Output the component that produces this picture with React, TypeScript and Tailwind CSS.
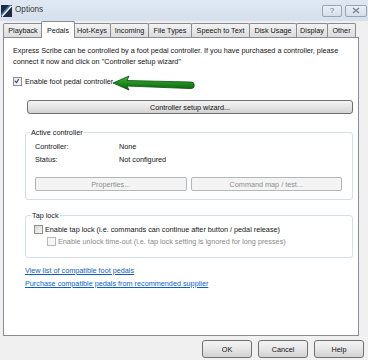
import React from 'react';

function Check({ checked, disabled }: { checked?: boolean; disabled?: boolean }) {
  return (
    <span
      className={`relative inline-flex shrink-0 w-[9px] h-[9px] border ${
        disabled
          ? 'border-[#b9b9b9] bg-[#f7f7f7]'
          : checked
          ? 'border-[#8e8f8f] bg-gradient-to-br from-[#e4e8ef] to-[#fcfcfd]'
          : 'border-[#8e8f8f] bg-gradient-to-br from-[#d6d6d6] to-[#f8f8f8]'
      }`}
    >
      {checked && (
        <svg viewBox="0 0 9 9" className="absolute inset-0 w-[7px] h-[7px]">
          <path d="M1.2 3.8 L3.2 6 L6.2 1.2" fill="none" stroke="#2f3b63" strokeWidth="1.4" />
        </svg>
      )}
    </span>
  );
}

const tabs: { label: string; cls: string; selected?: boolean }[] = [
  { label: 'Playback', cls: 'w-[40px]' },
  { label: 'Pedals', cls: 'w-[34px] -ml-[2px] -mr-[2px]', selected: true },
  { label: 'Hot-Keys', cls: 'w-[38px]' },
  { label: 'Incoming', cls: 'w-[39px] -ml-[1px]' },
  { label: 'File Types', cls: 'w-[44px] -ml-[1px]' },
  { label: 'Speech to Text', cls: 'w-[59px] -ml-[1px]' },
  { label: 'Disk Usage', cls: 'w-[48px] -ml-[1px]' },
  { label: 'Display', cls: 'w-[32px] -ml-[1px]' },
  { label: 'Other', cls: 'w-[29px] -ml-[1px]' },
];

function WinButton({ label, cls }: { label: string; cls: string }) {
  return (
    <div
      className={`flex items-center justify-center border border-[#707070] rounded-[3px] bg-gradient-to-b from-[#f4f4f4] via-[#e6e6e6] to-[#d2d2d2] text-[#111] ${cls}`}
    >
      {label}
    </div>
  );
}

function DisabledButton({ label }: { label: string }) {
  return (
    <div className="flex items-center justify-center h-[14px] border border-[#b3b7ba] rounded-[2px] bg-[#f4f4f4] text-[#8d8d8d]">
      {label}
    </div>
  );
}

export default function App() {
  return (
    <div className="w-[368px] h-[360px] bg-[#f0f0f0] relative overflow-hidden font-['Liberation_Sans',Arial,sans-serif] text-[7.25px] leading-[11px] text-[#141414]">
      {/* Title bar */}
      <div className="h-[21px] flex items-center bg-gradient-to-b from-[#dfe8f3] to-[#d6e0ec]">
        <svg viewBox="0 0 11 12" className="ml-[1px] w-[11px] h-[12px] shrink-0">
          <rect x="0" y="0" width="11" height="12" fill="#1d2a44" />
          <path d="M0 12 L0 9 L8 0 L11 0 Z" fill="#3d74b8" />
          <path d="M1 11.5 L10.5 1" stroke="#ffffff" strokeWidth="1.4" />
        </svg>
        <span className="ml-[3px] text-[8.2px] text-[#3a3a3a] leading-none">Options</span>
        <div className="ml-auto mr-[1px] flex gap-[3px]">
          <div className="w-[20px] h-[12px] border border-[#9aa3b0] rounded-[2px] bg-gradient-to-b from-[#e9eff6] to-[#d6dfea] flex items-center justify-center text-[8px] text-[#6a6f78] leading-none">
            ?
          </div>
          <div className="w-[22px] h-[12px] border border-[#9aa3b0] rounded-[2px] bg-gradient-to-b from-[#e9eff6] to-[#d6dfea] flex items-center justify-center">
            <svg viewBox="0 0 8 7" className="w-[8px] h-[7px]">
              <path d="M1 1 L7 6 M7 1 L1 6" stroke="#7a808a" strokeWidth="1.3" />
            </svg>
          </div>
        </div>
      </div>

      {/* Tabs */}
      <div className="flex items-end h-[17px] pl-[3px] relative z-10 -mb-[1px]">
        {tabs.map((t) =>
          t.selected ? (
            <div
              key={t.label}
              className={`relative z-10 h-[17px] border border-b-0 border-[#898c95] rounded-t-[2px] bg-white flex items-start justify-center pt-[3px] ${t.cls}`}
            >
              {t.label}
            </div>
          ) : (
            <div
              key={t.label}
              className={`h-[14px] mb-[1px] border border-b-0 border-[#898c95] rounded-t-[2px] bg-gradient-to-b from-[#f3f3f3] to-[#dcdcdc] flex items-center justify-center whitespace-nowrap ${t.cls}`}
            >
              {t.label}
            </div>
          )
        )}
      </div>

      {/* Panel */}
      <div className="ml-[3px] w-[356px] h-[299px] border border-[#898c95] bg-white flex flex-col pl-[9px] pr-[5px]">
        <p className="pt-[7px] whitespace-nowrap">
          Express Scribe can be controlled by a foot pedal controller. If you have purchased a controller, please
          <br />
          connect it now and click on &quot;Controller setup wizard&quot;
        </p>

        <div className="mt-[8px] h-[13px] flex items-center gap-[3px]">
          <Check checked />
          <span>Enable foot pedal controller</span>
        </div>

        <WinButton label="Controller setup wizard..." cls="mt-[12px] ml-[14px] h-[14px]" />

        <fieldset className="mt-[13px] ml-[12px] border border-[#d5dfe5] rounded-[3px] pl-[9px] pr-[10px] pb-[8px]">
          <legend className="-ml-[5px] px-[1px] leading-[11px]">Active controller</legend>
          <div className="mt-[2px] flex h-[13px] items-center">
            <span className="w-[84px]">Controller:</span>
            <span>None</span>
          </div>
          <div className="flex h-[13px] items-center">
            <span className="w-[84px]">Status:</span>
            <span>Not configured</span>
          </div>
          <div className="mt-[11px] grid grid-cols-2 gap-[4px]">
            <DisabledButton label="Properties..." />
            <DisabledButton label="Command map / test..." />
          </div>
        </fieldset>

        <fieldset className="mt-[10px] ml-[12px] border border-[#d5dfe5] rounded-[3px] pl-[8px] pr-[10px] pb-[10px]">
          <legend className="-ml-[3px] px-[1px] leading-[11px]">Tap lock</legend>
          <div className="mt-[2px] h-[12px] flex items-center gap-[2px]">
            <Check />
            <span>Enable tap lock (i.e. commands can continue after button / pedal release)</span>
          </div>
          <div className="h-[12px] flex items-center gap-[2px] pl-[13px]">
            <Check disabled />
            <span className="text-[#8a8a8a]">
              Enable unlock time-out (i.e. tap lock setting is ignored for long presses)
            </span>
          </div>
        </fieldset>

        <div className="mt-[6px] ml-[12px] flex flex-col leading-[13px] text-[#0b5fc4]">
          <span className="underline">View list of compatible foot pedals</span>
          <span className="underline">Purchase compatible pedals from recommended supplier</span>
        </div>
      </div>

      {/* Bottom buttons */}
      <div className="flex justify-end gap-[6px] mt-[4px] pr-[4px]">
        <WinButton label="OK" cls="w-[50px] h-[18px]" />
        <WinButton label="Cancel" cls="w-[50px] h-[18px]" />
        <WinButton label="Help" cls="w-[50px] h-[18px]" />
      </div>

      {/* Green annotation arrow */}
      <svg viewBox="0 0 84 18" className="absolute left-[111px] top-[74px] w-[84px] h-[18px]">
        <defs>
          <linearGradient id="ga" x1="0" y1="0" x2="0" y2="1">
            <stop offset="0" stopColor="#45b845" />
            <stop offset="0.5" stopColor="#1f8f1f" />
            <stop offset="1" stopColor="#0e5e0e" />
          </linearGradient>
        </defs>
        <path
          d="M2 9 L18 2 L16 6.5 L80 8 A3.3 3.3 0 0 1 80 14.6 L16 12 L18 16 Z"
          fill="url(#ga)"
          stroke="#0b4d0b"
          strokeWidth="0.8"
          strokeLinejoin="round"
        />
      </svg>
    </div>
  );
}
